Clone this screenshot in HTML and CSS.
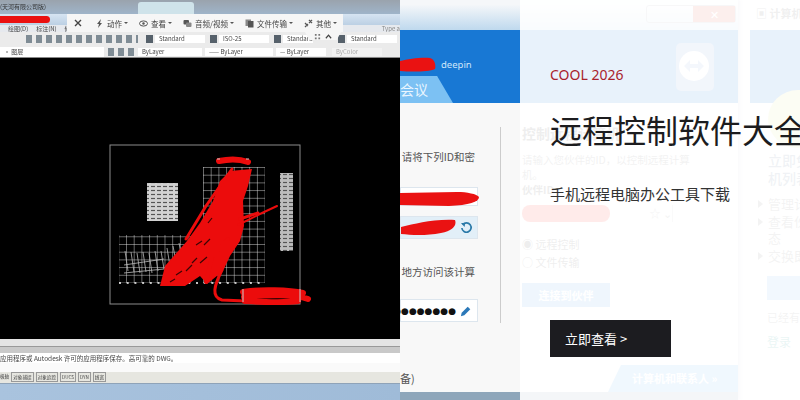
FILE: index.html
```html
<!DOCTYPE html>
<html>
<head>
    <title>远程控制软件大全</title>
    <link rel="stylesheet" href="styles.css">
</head>
<body>

<div class="hero">

    <!-- left picture: cad program -->
    <div class="cad">
        <div class="tabs"><span class="win-title">(天河有限公司版)</span><span class="tab-on"></span></div>
        <div class="titlebar"></div>
        <div class="menubar"><span>绘图(D)</span><span>标注(N)</span><span>修改</span><span class="type-hint">Type a</span></div>
        <div class="toolbar">
            <span class="icons icons-a"></span>
            <span class="tool-icon"></span><span class="pick pick-a">Standard</span>
            <span class="tool-icon"></span><span class="pick pick-a">ISO-25</span>
            <span class="tool-icon"></span><span class="pick pick-b">Standard</span>
            <span class="tool-icon tool-gap"></span><span class="pick pick-a">Standard</span>
        </div>
        <div class="layerbar">
            <span class="pick pick-layer">▫ 图层</span>
            <span class="icons icons-b"></span>
            <span class="pick pick-c">ByLayer</span>
            <span class="pick pick-d">—— ByLayer</span>
            <span class="pick pick-e">— ByLayer</span>
            <span class="pick pick-f">ByColor</span>
        </div>

        <svg class="canvas" viewBox="0 57 400 281">
            <defs>
                <pattern id="cell" x="203" y="166" width="7.7" height="7.7" patternUnits="userSpaceOnUse">
                    <path d="M0 0H7.7M0 0V7.7" stroke="#e2e2e2" stroke-width="0.9" fill="none"/>
                </pattern>
                <pattern id="rows" width="6" height="4" patternUnits="userSpaceOnUse">
                    <path d="M1 1.5H5" stroke="#555" stroke-width="1.2"/>
                </pattern>
            </defs>
            <rect x="110" y="144" width="190" height="159" fill="none" stroke="#8c8c8c"/>
            <rect x="203" y="166" width="62" height="116" fill="url(#cell)"/>
            <rect x="119" y="234" width="72" height="48" fill="url(#cell)"/>
            <path d="M125 250l3 20M131 251l3 20M137 252l3 20M143 251l3 20M149 252l3 20M155 250l3 20M161 250l3 18M167 247l3 18M173 245l3 16M179 242l3 16M124 264l40-6M124 272l40-4" stroke="#bbb" stroke-width="0.8"/>
            <path d="M119 282H265" stroke="#fff" stroke-width="1.4" stroke-dasharray="2 5.7"/>
            <rect x="147" y="182" width="31" height="38" fill="#d2d2d2"/>
            <rect x="147" y="182" width="31" height="38" fill="url(#rows)"/>
            <rect x="280" y="172" width="13" height="78" fill="#bdbdbd"/>
            <rect x="280" y="172" width="13" height="78" fill="url(#rows)"/>

            <!-- red scribble over the drawing -->
            <path d="M160 285L165 265L187 240L200 222L213 200L220 180L230 170L252 168L248 185L243 200L244 225L240 240L230 255L223 270L207 283L200 275L185 285Z" fill="#ec0c0c"/>
            <g fill="none" stroke="#ec0c0c" stroke-linecap="round">
                <path d="M222 269C214 285 211 296 222 299L245 300" stroke-width="3"/>
                <path d="M219 160C228 158 240 158 248 161" stroke-width="6"/>
                <path d="M243 291C260 288 290 289 303 292M244 296C265 294 295 293 308 298M245 300C262 301 285 302 298 300" stroke-width="6"/>
                <path d="M186 238L206 205L232 168" stroke-width="3"/>
                <path d="M238 224L262 212L277 205" stroke-width="2"/>
                <path d="M240 218L258 212" stroke-width="3"/>
                <path d="M206 281L212 256L228 238" stroke-width="4"/>
            </g>
            <path d="M196 244l6-4M192 262l5-5M204 244l6-6M176 274l6-4M186 270l6-6M200 262l7-6M208 222l4-5M170 281l5-3" stroke="#3a0505" stroke-width="1.2"/>
            <path d="M217 158h3M246 158h3M243 288v13M300 288v13" stroke="#ccc" stroke-width="1"/>
        </svg>

        <div class="scrollrow"></div>
        <div class="cmd-gap"></div>
        <div class="cmdline">应用程序或 Autodesk 许可的应用程序保存。高可靠的 DWG。</div>
        <div class="cmd-blank"></div>
        <div class="statusbar">
            <span>极轴</span><span class="on">对象捕捉</span><span class="on">对象追踪</span><span class="on">DUCS</span><span class="on">DYN</span><span class="on">线宽</span>
        </div>
        <div class="taskbar"></div>

        <!-- floating remote control bar -->
        <div class="float-bar">
            <svg class="fb-close" viewBox="0 0 8 8"><path d="M1 1L7 7M7 1L1 7" stroke="#444" stroke-width="1.4"/></svg>
            <span class="fb-item">
                <svg viewBox="0 0 9 9"><path d="M6 0L2 5H4L3 9L7 4H5Z" fill="#555"/></svg>动作<i></i>
            </span>
            <span class="fb-item">
                <svg viewBox="0 0 9 9"><ellipse cx="4.5" cy="4.5" rx="4" ry="2.6" fill="none" stroke="#555"/><circle cx="4.5" cy="4.5" r="1.2" fill="#555"/></svg>查看<i></i>
            </span>
            <span class="fb-item">
                <svg viewBox="0 0 9 9"><rect x="0.5" y="1" width="5.5" height="4.5" rx="1" fill="#555"/><rect x="3" y="3.5" width="5.5" height="4.5" rx="1" fill="#888"/></svg>音频/视频<i></i>
            </span>
            <span class="fb-item">
                <svg viewBox="0 0 9 9"><rect x="0.5" y="0.5" width="5.5" height="6.5" fill="#888"/><rect x="3" y="2" width="5.5" height="6.5" fill="#555"/></svg>文件传输<i></i>
            </span>
            <span class="fb-item">
                <svg viewBox="0 0 9 9"><path d="M1 8L4 5M5 4L8 1M1 4L4 7M5 1L8 4" stroke="#555" stroke-width="1.3"/></svg>其他<i></i>
            </span>
        </div>
        <div class="float-tab">
            <svg viewBox="0 0 8 8"><path d="M1 1h2v2H1zM5 1h2v2H5zM1 5h2v2H1zM5 5h2v2H5z" fill="#777"/></svg>
            <svg viewBox="0 0 8 8"><path d="M1 6L4 2.5L7 6" fill="none" stroke="#444" stroke-width="1.4"/></svg>
        </div>
    </div>

    <!-- right picture: remote control program -->
    <div class="remote">
        <div class="panel panel-main">
            <div class="win-head"><span class="win-btns"><span class="btn-min"></span><span class="btn-close">✕</span></span></div>
            <div class="band">
                <div class="band-name">
                    <svg class="scrawl-name" viewBox="0 0 36 15"><path d="M0 4C8 2 22 0 30 1C35 2 36 9 35 12C28 15 12 15 0 14Z" fill="#ea1212"/></svg>
                    <span>deepin</span>
                </div>
                <div class="band-tab">会议</div>
                <svg class="tv-logo" viewBox="0 0 40 50">
                    <rect x="1" y="1" width="38" height="48" rx="5" fill="#7d9fd6"/>
                    <circle cx="19" cy="24" r="15" fill="#fff"/>
                    <path d="M9 24l6-6v4h8v-4l6 6-6 6v-4h-8v4z" fill="#8fb0dc"/>
                </svg>
            </div>
            <div class="work">
                <div class="col-a">
                    <p class="ask">请将下列ID和密</p>
                    <div class="id-box">
                        <svg class="scrawl-id" viewBox="0 0 80 14"><path d="M0 1L58 0C68 0 78 2 80 5C80 10 70 13 50 14L0 13Z" fill="#ea1212"/></svg>
                    </div>
                    <div class="id-box id-blue">
                        <svg class="scrawl-pw" viewBox="0 0 55 17"><path d="M0 8C15 5 30 0 54 1C56 6 52 12 40 14C25 17 10 16 0 15Z" fill="#ea1212"/></svg>
                        <svg class="refresh" viewBox="0 0 14 14">
                            <path d="M3 3.5A5 5 0 1 1 2 7" fill="none" stroke="#2a79a8" stroke-width="1.8"/>
                            <path d="M1 1.5L5.5 1.5L5 6Z" fill="#2a79a8"/>
                        </svg>
                    </div>
                    <p class="ask ask-b">地方访问该计算</p>
                    <div class="id-box id-pass">
                        <span class="dots">●●●●●●●●</span>
                        <svg class="pencil" viewBox="0 0 14 14">
                            <path d="M1 13l1-4 7-7 3 3-7 7z" fill="#2b78b8"/>
                        </svg>
                    </div>
                </div>
                <div class="col-b">
                    <h4>控制远程计算机</h4>
                    <p>请输入您伙伴的ID，以控制远程计算机。</p>
                    <h5>伙伴ID</h5>
                    <div class="partner"><span class="scrawl-partner"></span><span class="star">☆ ⌄</span></div>
                    <div class="radio radio-first">◉ 远程控制</div>
                    <div class="radio">○ 文件传输</div>
                    <div class="connect">连接到伙伴</div>
                </div>
            </div>
            <div class="foot">
                <span class="foot-note">备)</span>
                <span class="foot-tab">计算机和联系人 »</span>
            </div>
        </div>
        <div class="panel panel-side">
            <div class="side-head">▣ 计算机</div>
            <div class="side-band"></div>
            <div class="side-logo"></div>
            <h4>立即免费创建计算机列表</h4>
            <ul>
                <li>管理计算机</li>
                <li>查看伙伴状态</li>
                <li>交换即时</li>
            </ul>
            <div class="side-btn"></div>
            <p>已经有帐户？</p>
            <p class="side-link">登录</p>
        </div>
    </div>

    <!-- text block lies over the picture -->
    <div class="cover">
        <div class="kicker">COOL 2026</div>
        <h1>远程控制软件大全</h1>
        <p class="sub">手机远程电脑办公工具下载</p>
        <a class="more" href="#">立即查看 &gt;</a>
    </div>

</div>

</body>
</html>
```
FILE: styles.css
```css
body {
    margin: 0;
    font-family: "Noto Sans CJK SC", "Noto Sans", sans-serif;
}
p, h1, h4, h5, ul {
    margin: 0;
    padding: 0;
}
.hero {
    position: relative;
    display: flex;
    width: 800px;
    height: 400px;
    overflow: hidden;
}

/* cad picture */
.cad {
    position: relative;
    display: flex;
    flex-direction: column;
    width: 400px;
    height: 400px;
    overflow: hidden;
    background-color: #eee;
    font-size: 6px;
    color: #444;
    filter: blur(0.4px);
}
.tabs {
    display: flex;
    height: 14px;
    background: linear-gradient(#9aa3ad, #9fb4c9);
    white-space: nowrap;
}
.win-title {
    width: 138px;
    padding-top: 2px;
    color: #333;
}
.tab-on {
    width: 56px;
    margin-top: 2px;
    border-radius: 3px 3px 0 0;
    background-color: #cfe3ea;
}
.titlebar {
    height: 11px;
    background: linear-gradient(#d6e4f2, #bcd0e4);
}
.titlebar::before {
    content: "";
    display: block;
    width: 50px;
    height: 7px;
    margin-top: 2px;
    border-radius: 0 4px 4px 0;
    background-color: #ea1010;
}
.menubar {
    display: flex;
    gap: 8px;
    height: 7px;
    padding-left: 8px;
    line-height: 7px;
    background-color: #e6e9ee;
}
.type-hint {
    margin-left: auto;
    color: #888;
}
.toolbar, .layerbar {
    display: flex;
    align-items: center;
    background-color: #ebebeb;
}
.toolbar {
    height: 14px;
}
.layerbar {
    height: 11px;
    border-bottom: 1px solid #888;
}
.icons {
    height: 8px;
    background: repeating-linear-gradient(90deg, #7f8c95 0 6px, #ebebeb 6px 10px);
}
.icons-a {
    width: 112px;
    margin: 0 6px 0 26px;
}
.icons-b {
    width: 26px;
    margin: 0 4px;
}
.tool-icon {
    width: 7px;
    height: 8px;
    margin: 0 2px;
    background-color: #56616b;
}
.tool-gap {
    margin-left: 24px;
}
.pick {
    height: 8px;
    line-height: 8px;
    padding-left: 4px;
    box-sizing: border-box;
    background-color: #fff;
    overflow: hidden;
    white-space: nowrap;
}
.pick-a { width: 50px; margin-right: 3px; }
.pick-b { width: 30px; margin-right: 1px; }
.pick-layer { width: 104px; height: 10px; line-height: 10px; }
.pick-c { width: 64px; margin: 0 3px 0 0; }
.pick-d { width: 68px; margin-right: 3px; }
.pick-e { width: 50px; margin-right: 6px; }
.pick-f { width: 50px; color: #aaa; background-color: #f2f2f2; }
.canvas {
    display: block;
    width: 400px;
    height: 281px;
    background-color: #000;
}
.scrollrow {
    height: 7px;
    background-color: #e4e4e4;
}
.cmd-gap {
    height: 7px;
    background-color: #c9c9c9;
    border-top: 1px solid #999;
    box-sizing: border-box;
}
.cmdline {
    height: 10px;
    line-height: 10px;
    font-size: 6.5px;
    background-color: #fff;
    white-space: nowrap;
}
.cmd-blank {
    height: 9px;
    background-color: #fafafa;
}
.statusbar {
    display: flex;
    gap: 2px;
    height: 11px;
    line-height: 8px;
    font-size: 4.6px;
    background-color: #e6e6e0;
    white-space: nowrap;
}
.statusbar .on {
    height: 8px;
    padding: 0 1px;
    border: 1px solid #999;
}
.taskbar {
    flex: 1;
    background: linear-gradient(90deg, #a9c3de, #9fbbd8);
    border-top: 1px solid #8fa3b8;
}
.float-bar {
    position: absolute;
    left: 67px;
    top: 14px;
    display: flex;
    align-items: center;
    gap: 11px;
    width: 276px;
    height: 18px;
    padding-left: 7px;
    box-sizing: border-box;
    background-color: #f6f6f6;
    font-size: 7.5px;
    color: #444;
    white-space: nowrap;
}
.fb-close {
    width: 8px;
    height: 8px;
    margin-right: 2px;
}
.fb-item {
    display: flex;
    align-items: center;
}
.fb-item svg {
    width: 9px;
    height: 9px;
    margin-right: 3px;
}
.fb-item i {
    width: 0;
    height: 0;
    margin-left: 2px;
    border: 2px solid transparent;
    border-top: 2.5px solid #555;
    border-bottom: 0;
}
.float-tab {
    position: absolute;
    left: 305px;
    top: 32px;
    display: flex;
    justify-content: center;
    align-items: center;
    gap: 4px;
    width: 36px;
    height: 8px;
    background-color: #f6f6f6;
    clip-path: polygon(0 0, 100% 0, 88% 100%, 12% 100%);
}
.float-tab svg {
    width: 7px;
    height: 7px;
}

/* remote control picture */
.remote {
    display: flex;
    width: 400px;
    height: 400px;
    background-color: #f7f8f9;
    font-size: 11px;
    color: #555;
}
.panel {
    display: flex;
    flex-direction: column;
    overflow: hidden;
}
.panel-main {
    width: 338px;
    background-color: #f8f8f8;
    box-shadow: 2px 0 3px #ccd;
}
.win-head {
    display: flex;
    justify-content: flex-end;
    height: 30px;
    padding-top: 5px;
    box-sizing: border-box;
    background: linear-gradient(#f5f7f9 15%, #bfd9ee);
}
.win-btns {
    display: flex;
    height: 16px;
    margin-right: 2px;
    border: 1px solid #aab;
    border-radius: 3px;
}
.btn-min { width: 46px; }
.btn-close {
    width: 42px;
    color: #fff;
    text-align: center;
    line-height: 16px;
    background-color: #e0604a;
}
.band {
    position: relative;
    height: 73px;
    background-color: #1878d4;
    color: #cfe6fa;
}
.band-name {
    display: flex;
    align-items: center;
    gap: 5px;
    padding-top: 27px;
    font-family: "Noto Sans", sans-serif;
    font-size: 9.5px;
    line-height: 15px;
}
.scrawl-name {
    width: 36px;
    height: 15px;
}
.band-tab {
    position: absolute;
    left: 0;
    bottom: 0;
    width: 53px;
    height: 27px;
    line-height: 27px;
    font-size: 14px;
    color: #eaf6ff;
    background-color: #7cc1f3;
    clip-path: polygon(0 0, 70% 0, 100% 100%, 0 100%);
}
.tv-logo {
    position: absolute;
    left: 275px;
    top: 12px;
    width: 40px;
    height: 50px;
}
.work {
    display: flex;
    flex: 1;
    padding-top: 24px;
}
.col-a {
    width: 100px;
    height: 196px;
    flex-shrink: 0;
    border-right: 1px solid #ccc;
    overflow: hidden;
}
.ask {
    width: 75px;
    padding-top: 21px;
    height: 39px;
    line-height: 18px;
    font-size: 10.5px;
    text-align: right;
    white-space: nowrap;
}
.ask-b {
    height: 18px;
    padding-top: 24px;
    margin-bottom: 18px;
}
.id-box {
    display: flex;
    align-items: center;
    justify-content: flex-end;
    box-sizing: border-box;
    width: 78px;
    height: 19px;
    background-color: #fff;
    border: 1px solid #dde6ee;
}
.id-blue {
    height: 23px;
    margin-top: 10px;
    gap: 4px;
    background-color: #e2eff8;
}
.id-pass {
    height: 23px;
    gap: 4px;
    padding-right: 5px;
}
.scrawl-id {
    width: 80px;
    height: 14px;
    flex-shrink: 0;
    margin: 5px -2px 0 0;
}
.scrawl-pw {
    width: 55px;
    height: 17px;
    flex-shrink: 0;
}
.refresh {
    width: 14px;
    height: 14px;
    margin-right: 4px;
}
.dots {
    font-family: "DejaVu Sans", sans-serif;
    font-size: 9px;
    color: #111;
    white-space: nowrap;
}
.pencil {
    width: 12px;
    height: 12px;
    flex-shrink: 0;
}
.col-b {
    flex: 1;
    padding-left: 21px;
}
.col-b h4 {
    margin-top: -4px;
    font-size: 14px;
    line-height: 20px;
}
.col-b p {
    width: 172px;
    margin-top: 9px;
    font-size: 10.5px;
    line-height: 15px;
    color: #777;
}
.col-b h5 {
    font-size: 10.5px;
    line-height: 16px;
}
.partner {
    display: flex;
    justify-content: space-between;
    width: 150px;
    height: 17px;
    margin-top: 7px;
    border-right: 1px solid #ccc;
}
.scrawl-partner {
    display: block;
    width: 88px;
    height: 17px;
    border-radius: 8px;
    background-color: #ff3a2e;
}
.star {
    color: #888;
    font-size: 11px;
}
.radio {
    margin-top: 4px;
    line-height: 14px;
}
.radio-first {
    margin-top: 15px;
}
.connect {
    width: 88px;
    height: 24px;
    margin-top: 14px;
    line-height: 24px;
    text-align: center;
    color: #fff;
    font-weight: bold;
    background-color: #5fa6e8;
}
.foot {
    display: flex;
    justify-content: space-between;
    align-items: flex-end;
    height: 38px;
    border-bottom: 8px solid #8ea6ba;
}
.foot-note {
    padding-bottom: 6px;
}
.foot-tab {
    width: 130px;
    height: 27px;
    padding-left: 24px;
    box-sizing: border-box;
    line-height: 27px;
    color: #fff;
    font-weight: bold;
    background-color: #66b2ee;
    clip-path: polygon(10% 0, 100% 0, 100% 100%, 0 100%);
}
.panel-side {
    width: 50px;
    margin-left: 12px;
    font-size: 11px;
    white-space: nowrap;
    background-color: #fbfbfb;
}
.side-head {
    height: 30px;
    padding: 5px 0 0 6px;
    box-sizing: border-box;
    font-weight: bold;
    color: #666;
}
.side-band {
    height: 73px;
    flex-shrink: 0;
    background-color: #1878d4;
}
.side-logo {
    width: 60px;
    height: 58px;
    flex-shrink: 0;
    margin: -13px 0 3px 18px;
    border-radius: 50%;
    background-color: #e2e490;
}
.panel-side h4 {
    flex-shrink: 0;
    width: 112px;
    margin-left: 18px;
    font-size: 14px;
    font-weight: 500;
    line-height: 18px;
    white-space: normal;
    color: #667f99;
}
.panel-side ul {
    flex-shrink: 0;
    list-style: none;
    margin: 9px 0 0 18px;
    width: 70px;
    font-size: 13px;
    line-height: 16px;
    color: #888;
}
.panel-side li {
    position: relative;
    margin-bottom: 2px;
    white-space: normal;
}
.panel-side li::before {
    content: "";
    position: absolute;
    left: -10px;
    top: 4px;
    border: 4px solid transparent;
    border-left: 5px solid #888;
    border-right: 0;
}
.side-btn {
    height: 24px;
    flex-shrink: 0;
    margin: 10px 0 0 17px;
    background-color: #7bb8ef;
}
.panel-side p {
    margin: 9px 0 0 17px;
    line-height: 16px;
    color: #888;
}
.panel-side .side-link {
    color: #2a9a96;
    font-size: 12px;
}

/* text block */
.cover {
    position: absolute;
    left: 520px;
    top: 0;
    width: 280px;
    height: 400px;
    padding: 66px 0 0 30px;
    box-sizing: border-box;
    overflow: hidden;
    white-space: nowrap;
    background-color: rgba(255, 255, 255, 0.9);
}
.kicker {
    font-family: "Noto Sans", sans-serif;
    font-size: 14px;
    line-height: 18px;
    color: #a8222c;
}
.cover h1 {
    margin-top: 22px;
    font-size: 32px;
    font-weight: 400;
    line-height: 46px;
    color: #1c1c1e;
}
.sub {
    margin-top: 31px;
    font-size: 15px;
    line-height: 22px;
    color: #333;
}
.more {
    display: block;
    width: 121px;
    height: 37px;
    margin-top: 115px;
    padding-left: 15px;
    box-sizing: border-box;
    font-size: 13px;
    line-height: 37px;
    color: #fff;
    text-decoration: none;
    background-color: #1c1c20;
}
```
